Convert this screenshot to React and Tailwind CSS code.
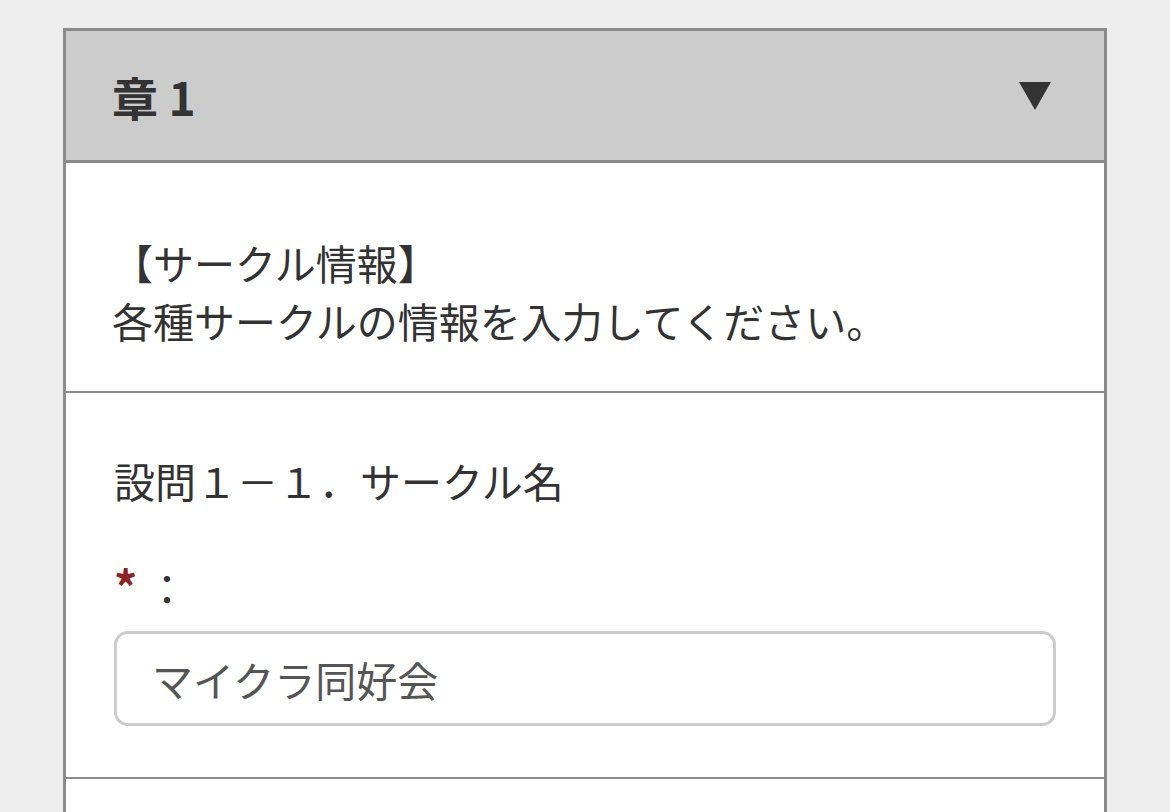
export default function App() {
  return (
    <div
      className="min-h-[812px] bg-[#eeeeee] pt-[28px]"
      style={{ fontFamily: '"Noto Sans CJK JP", "Noto Sans", sans-serif' }}
    >
      <div className="mx-auto w-[1044px] border-x-[3px] border-t-[3px] border-[#8a8a8a] bg-white">
        {/* Chapter header */}
        <div className="flex h-[132px] items-center justify-between border-b-[3px] border-[#8a8a8a] bg-[#cccccc] pl-[46px] pr-[53px]">
          <h2 className="text-[46px] font-bold leading-none text-[#333333]">章 1</h2>
          <svg width="32" height="28" viewBox="0 0 32 28" aria-hidden="true">
            <polygon points="0,0 32,0 16,28" fill="#333333" />
          </svg>
        </div>

        {/* Section description */}
        <div className="border-b-[2px] border-[#8a8a8a] px-[46px] pb-[42px] pt-[70px] text-[41px] leading-[58px] text-[#333333]">
          <p>【サークル情報】</p>
          <p>各種サークルの情報を入力してください。</p>
        </div>

        {/* Question */}
        <div className="border-b-[2px] border-[#8a8a8a] px-[48px] pb-[51px] pt-[58px] text-[41px] leading-[58px] text-[#333333]">
          <p>設問１－１．サークル名</p>
          <p className="mt-[47px]">
            <span className="text-[46px] font-bold text-[#8b2323]">*</span> ：
          </p>
          <input
            type="text"
            defaultValue="マイクラ同好会"
            className="mt-[15px] block h-[95px] w-full rounded-[14px] border-[3px] border-[#cccccc] bg-white pl-[35px] text-[41px] text-[#555555] outline-none"
          />
        </div>
        <div className="h-[40px]" />
      </div>
    </div>
  );
}
